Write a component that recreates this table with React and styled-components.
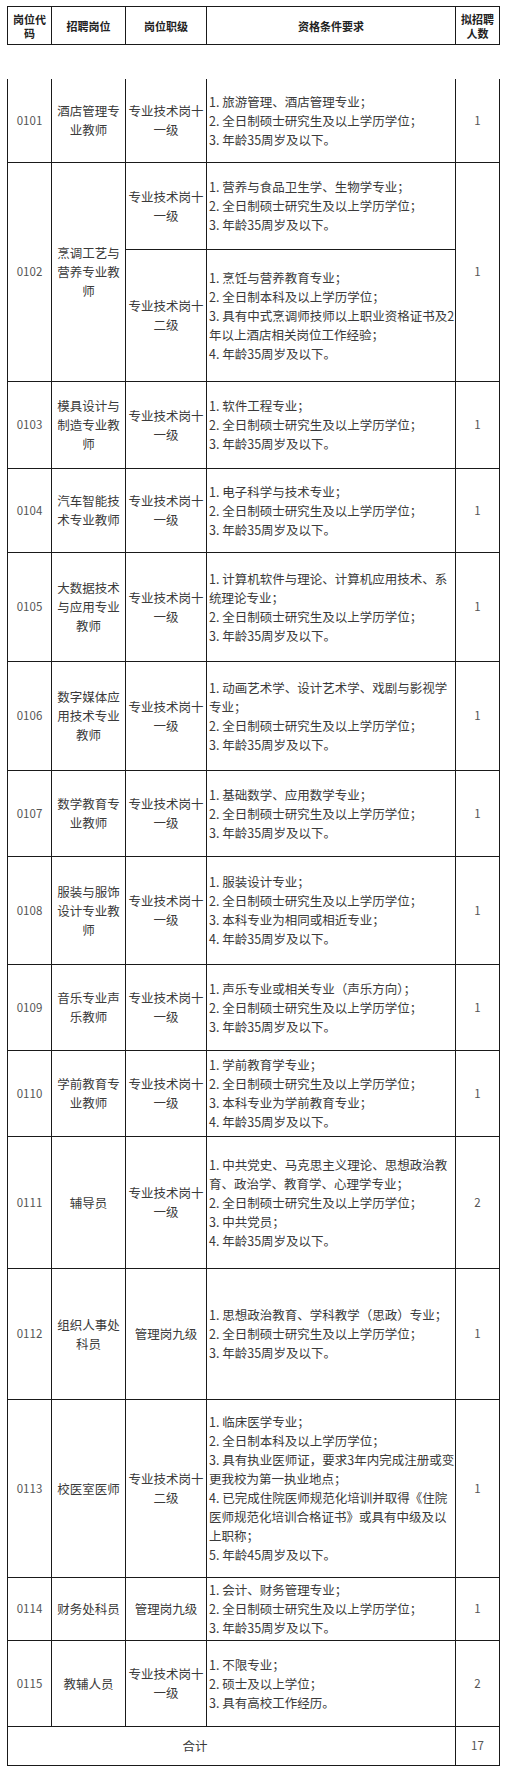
import React from 'react';
import styled, { createGlobalStyle } from 'styled-components';

const GlobalStyle = createGlobalStyle`
  html, body {
    margin: 0;
    padding: 0;
    background: #fff;
  }
  body {
    font-family: "Noto Sans CJK SC", "Noto Sans", sans-serif;
    color: #333;
  }
`;

const RULE = '#1a1a1a';
const WIDTHS = [44, 74, 81, 249, 44];

const posts = [
  {
    code: '0101', name: '酒店管理专业教师', count: 1,
    levels: [{ level: '专业技术岗十一级', h: 83, reqs: ['旅游管理、酒店管理专业；', '全日制硕士研究生及以上学历学位；', '年龄35周岁及以下。'] }],
  },
  {
    code: '0102', name: '烹调工艺与营养专业教师', count: 1,
    levels: [
      { level: '专业技术岗十一级', h: 87, reqs: ['营养与食品卫生学、生物学专业；', '全日制硕士研究生及以上学历学位；', '年龄35周岁及以下。'] },
      { level: '专业技术岗十二级', h: 132, reqs: ['烹饪与营养教育专业；', '全日制本科及以上学历学位；', '具有中式烹调师技师以上职业资格证书及2年以上酒店相关岗位工作经验；', '年龄35周岁及以下。'] },
    ],
  },
  {
    code: '0103', name: '模具设计与制造专业教师', count: 1,
    levels: [{ level: '专业技术岗十一级', h: 87, reqs: ['软件工程专业；', '全日制硕士研究生及以上学历学位；', '年龄35周岁及以下。'] }],
  },
  {
    code: '0104', name: '汽车智能技术专业教师', count: 1,
    levels: [{ level: '专业技术岗十一级', h: 84, reqs: ['电子科学与技术专业；', '全日制硕士研究生及以上学历学位；', '年龄35周岁及以下。'] }],
  },
  {
    code: '0105', name: '大数据技术与应用专业教师', count: 1,
    levels: [{ level: '专业技术岗十一级', h: 109, reqs: ['计算机软件与理论、计算机应用技术、系统理论专业；', '全日制硕士研究生及以上学历学位；', '年龄35周岁及以下。'] }],
  },
  {
    code: '0106', name: '数字媒体应用技术专业教师', count: 1,
    levels: [{ level: '专业技术岗十一级', h: 109, reqs: ['动画艺术学、设计艺术学、戏剧与影视学专业；', '全日制硕士研究生及以上学历学位；', '年龄35周岁及以下。'] }],
  },
  {
    code: '0107', name: '数学教育专业教师', count: 1,
    levels: [{ level: '专业技术岗十一级', h: 86, reqs: ['基础数学、应用数学专业；', '全日制硕士研究生及以上学历学位；', '年龄35周岁及以下。'] }],
  },
  {
    code: '0108', name: '服装与服饰设计专业教师', count: 1,
    levels: [{ level: '专业技术岗十一级', h: 108, reqs: ['服装设计专业；', '全日制硕士研究生及以上学历学位；', '本科专业为相同或相近专业；', '年龄35周岁及以下。'] }],
  },
  {
    code: '0109', name: '音乐专业声乐教师', count: 1,
    levels: [{ level: '专业技术岗十一级', h: 86, reqs: ['声乐专业或相关专业（声乐方向）；', '全日制硕士研究生及以上学历学位；', '年龄35周岁及以下。'] }],
  },
  {
    code: '0110', name: '学前教育专业教师', count: 1,
    levels: [{ level: '专业技术岗十一级', h: 86, reqs: ['学前教育学专业；', '全日制硕士研究生及以上学历学位；', '本科专业为学前教育专业；', '年龄35周岁及以下。'] }],
  },
  {
    code: '0111', name: '辅导员', count: 2,
    levels: [{ level: '专业技术岗十一级', h: 132, reqs: ['中共党史、马克思主义理论、思想政治教育、政治学、教育学、心理学专业；', '全日制硕士研究生及以上学历学位；', '中共党员；', '年龄35周岁及以下。'] }],
  },
  {
    code: '0112', name: '组织人事处科员', count: 1,
    levels: [{ level: '管理岗九级', h: 131, reqs: ['思想政治教育、学科教学（思政）专业；', '全日制硕士研究生及以上学历学位；', '年龄35周岁及以下。'] }],
  },
  {
    code: '0113', name: '校医室医师', count: 1,
    levels: [{ level: '专业技术岗十二级', h: 178, reqs: ['临床医学专业；', '全日制本科及以上学历学位；', '具有执业医师证，要求3年内完成注册或变更我校为第一执业地点；', '已完成住院医师规范化培训并取得《住院医师规范化培训合格证书》或具有中级及以上职称；', '年龄45周岁及以下。'] }],
  },
  {
    code: '0114', name: '财务处科员', count: 1,
    levels: [{ level: '管理岗九级', h: 63, reqs: ['会计、财务管理专业；', '全日制硕士研究生及以上学历学位；', '年龄35周岁及以下。'] }],
  },
  {
    code: '0115', name: '教辅人员', count: 2,
    levels: [{ level: '专业技术岗十一级', h: 86, reqs: ['不限专业；', '硕士及以上学位；', '具有高校工作经历。'] }],
  },
];

const total = posts.reduce((sum, p) => sum + p.count, 0);

const App = () => {
  return (
    <Page>
      <GlobalStyle />
      <HeadTable>
        <Cols />
        <tbody>
          <tr>
            <HeadCell>岗位代码</HeadCell>
            <HeadCell>招聘岗位</HeadCell>
            <HeadCell>岗位职级</HeadCell>
            <HeadCell>资格条件要求</HeadCell>
            <HeadCell>拟招聘人数</HeadCell>
          </tr>
        </tbody>
      </HeadTable>

      <BodyTable>
        <Cols />
        <tbody>
          {posts.map((p) =>
            p.levels.map((lv, i) => (
              <Row key={p.code + i} $h={lv.h}>
                {i === 0 && (
                  <>
                    <CodeCell rowSpan={p.levels.length}>{p.code}</CodeCell>
                    <NameCell rowSpan={p.levels.length}>{p.name}</NameCell>
                  </>
                )}
                <LevelCell>{lv.level}</LevelCell>
                <ReqCell>
                  {lv.reqs.map((r, k) => (
                    <ReqLine key={k}>{`${k + 1}. ${r}`}</ReqLine>
                  ))}
                </ReqCell>
                {i === 0 && <CountCell rowSpan={p.levels.length}>{p.count}</CountCell>}
              </Row>
            ))
          )}
          <Row $h={39}>
            <TotalLabel colSpan={4}>合计</TotalLabel>
            <CountCell>{total}</CountCell>
          </Row>
        </tbody>
      </BodyTable>
    </Page>
  );
};

export default App;

const Cols = () => (
  <colgroup>
    {WIDTHS.map((w, i) => <col key={i} style={{ width: w }} />)}
  </colgroup>
);

const Page = styled.div`
  width: 508px;
  padding: 6px 0 3px 7px;
  box-sizing: border-box;
`

const TableBase = styled.table`
  width: 492px;
  table-layout: fixed;
  border-collapse: collapse;
  border-spacing: 0;
`

const HeadTable = styled(TableBase)`
  margin-bottom: 34px;
`

const BodyTable = styled(TableBase)`
  tbody tr:first-child td {
    border-top: none;
  }
`

const Row = styled.tr`
  height: ${({ $h }) => $h}px;
`

const Cell = styled.td`
  border: 1px solid ${RULE};
  padding: 0 3px;
  vertical-align: middle;
  text-align: center;
  font-size: 12.5px;
  line-height: 19px;
  color: #3a3a3a;
`

const HeadCell = styled(Cell)`
  height: 37px;
  padding: 0 2px;
  font-size: 11px;
  line-height: 14px;
  font-weight: 700;
  color: #222;
`

const CodeCell = styled(Cell)`
  padding: 0;
  font-size: 11.5px;
  color: #555;
`

const NameCell = styled(Cell)`
  padding: 0 4px;
`

const LevelCell = styled(Cell)`
  padding: 0 2px;
`

const ReqCell = styled(Cell)`
  padding: 0 0 0 2px;
  text-align: left;
`

const ReqLine = styled.div`
  word-break: normal;
  line-break: normal;
`

const CountCell = styled(Cell)`
  padding: 0;
  font-size: 11.5px;
  color: #555;
`

const TotalLabel = styled(Cell)`
  padding-right: 76px;
`
